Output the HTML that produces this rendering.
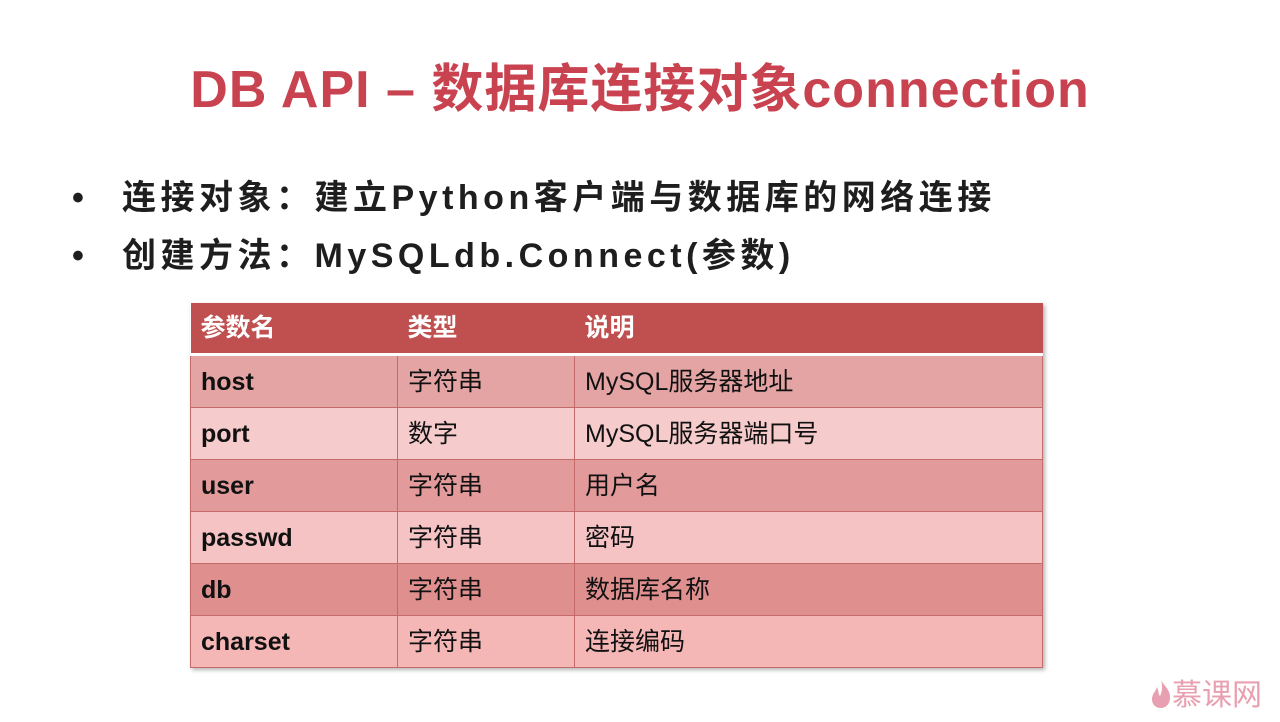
<!DOCTYPE html>
<html><head><meta charset="utf-8"><style>
body{margin:0;width:1280px;height:722px;background:#fff;font-family:"Liberation Sans","Noto Sans CJK SC",sans-serif;position:relative;overflow:hidden}
h1{position:absolute;top:58px;left:0;width:1280px;text-align:center;margin:0;font-size:52px;line-height:64px;color:#c8434f;font-weight:bold;letter-spacing:1px}
.b{position:absolute;left:72px;font-size:34px;line-height:44px;font-weight:bold;color:#1e1e1e;white-space:nowrap;letter-spacing:4.5px}
.b span{display:inline-block;width:50px}
table{position:absolute;left:190px;top:303px;width:853px;border-collapse:collapse;font-size:25px;box-shadow:2px 2px 4px rgba(0,0,0,.3)}
td,th{height:51px;line-height:30px;padding:0 0 0 10px;text-align:left;border:1px solid #c46a6a;color:#111;vertical-align:middle}
th{background:#c05050;color:#fff;height:50px;border:none;border-bottom:3px solid #fff;font-weight:bold}
td:first-child{font-weight:bold;width:196px}
td:nth-child(2){width:166px}
.logo{position:absolute;right:18px;bottom:8px;color:#e8a0b0;font-size:30px}
</style></head><body>
<h1>DB API – 数据库连接对象connection</h1>
<div class="b" style="top:176px"><span>•</span>连接对象：建立Python客户端与数据库的网络连接</div>
<div class="b" style="top:234px"><span>•</span>创建方法：MySQLdb.Connect(参数)</div>
<table>
<tr><th>参数名</th><th>类型</th><th>说明</th></tr>
<tr style="background:#e4a4a4"><td>host</td><td>字符串</td><td>MySQL服务器地址</td></tr>
<tr style="background:#f5cbcb"><td>port</td><td>数字</td><td>MySQL服务器端口号</td></tr>
<tr style="background:#e29a9a"><td>user</td><td>字符串</td><td>用户名</td></tr>
<tr style="background:#f5c3c3"><td>passwd</td><td>字符串</td><td>密码</td></tr>
<tr style="background:#e08f8f"><td>db</td><td>字符串</td><td>数据库名称</td></tr>
<tr style="background:#f5b6b6"><td>charset</td><td>字符串</td><td>连接编码</td></tr>
</table>
<div class="logo"><svg width="22" height="30" viewBox="0 0 22 30" style="vertical-align:-4px"><path d="M11 1C14 7 21 11 20 20C19 27 14 29 11 29C6 29 2 26 2 20C2 15 6 12 7 8C9 12 8 15 10 17C12 13 13 8 11 1Z" fill="#e8a0b0"/></svg>慕课网</div>
</body></html>
